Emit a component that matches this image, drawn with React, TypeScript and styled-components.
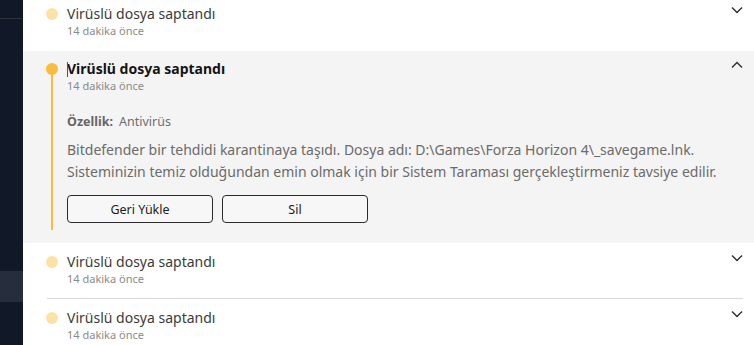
import React from 'react';
import styled, { createGlobalStyle, css } from 'styled-components';

const GlobalStyle = createGlobalStyle`
  html, body {
    margin: 0;
    padding: 0;
    overflow: hidden;
  }
  body {
    font-family: "Noto Sans", "Open Sans", sans-serif;
  }
`;

const Shell = styled.div`
  display: flex;
  width: 754px;
  height: 345px;
  overflow: hidden;
  background: #ffffff;
`;

const Sidebar = styled.aside`
  width: 23px;
  flex-shrink: 0;
  background: #111827;
  display: flex;
  flex-direction: column;
  padding-top: 18px;
`;

const SideDivider = styled.div`
  height: 1px;
  background: #2c313c;
`;

const SideActive = styled.div`
  margin-top: 252px;
  height: 31px;
  background: #262e3d;
`;

const Main = styled.main`
  flex: 1;
  overflow: hidden;
`;

const List = styled.ul`
  list-style: none;
  margin: -5px 0 0;
  padding: 0;
`;

const Item = styled.li<{ $open?: boolean; $divider?: boolean }>`
  position: relative;
  display: grid;
  grid-template-columns: 12px 1fr 20px;
  column-gap: 9px;
  padding: 9px 7px 0 23px;
  height: ${({ $open }) => ($open ? '192px' : '56px')};
  box-sizing: border-box;
  background: ${({ $open }) => ($open ? '#f4f4f4' : '#ffffff')};
  ${({ $open }) =>
    $open &&
    css`
      padding-top: 8px;
    `}
  ${({ $divider }) =>
    $divider &&
    css`
      &::after {
        content: '';
        position: absolute;
        left: 24px;
        right: 11px;
        bottom: 0;
        height: 1px;
        background: #d9d9d9;
      }
    `}
`;

const Rail = styled.div<{ $open?: boolean }>`
  position: relative;
  display: flex;
  justify-content: center;
  padding-top: 4px;
  ${({ $open }) =>
    $open &&
    css`
      &::after {
        content: '';
        position: absolute;
        top: 12px;
        left: 5px;
        width: 2px;
        height: 159px;
        background: #fbbc3e;
      }
    `}
`;

const Dot = styled.span<{ $open?: boolean }>`
  width: 12px;
  height: 12px;
  border-radius: 50%;
  background: ${({ $open }) => ($open ? '#fbbc3e' : '#fde2a5')};
`;

const Body = styled.div`
  display: flex;
  flex-direction: column;
  min-width: 0;
`;

const Title = styled.div<{ $open?: boolean }>`
  position: relative;
  font-size: 14px;
  line-height: 20px;
  color: ${({ $open }) => ($open ? '#141414' : '#3b3b3b')};
  font-weight: ${({ $open }) => ($open ? 700 : 400)};
  white-space: nowrap;
  ${({ $open }) =>
    $open &&
    css`
      &::before {
        content: '';
        position: absolute;
        left: 0;
        top: 3px;
        width: 1px;
        height: 15px;
        background: #1e5fb4;
      }
    `}
`;

const Time = styled.div`
  font-size: 11px;
  line-height: 14px;
  color: #8a8a8a;
`;

const Property = styled.div`
  margin-top: 21px;
  font-size: 12.5px;
  line-height: 16px;
  color: #6e6e6e;
  display: flex;
  gap: 6px;

  strong {
    font-weight: 700;
    color: #666666;
  }
`;

const Message = styled.p`
  margin: 9px 0 0;
  font-size: 14px;
  line-height: 22px;
  color: #6b6b6b;
  white-space: nowrap;
`;

const Actions = styled.div`
  display: flex;
  gap: 9px;
  margin-top: 12px;
`;

const Button = styled.button`
  width: 146px;
  height: 28px;
  border: 1px solid #2a2a2a;
  border-radius: 4px;
  background: #f7f7f7;
  font-family: inherit;
  font-size: 12.5px;
  color: #1c1c1c;
  padding: 0;
  cursor: pointer;
`;

const Toggle = styled.div`
  display: flex;
  justify-content: center;
  padding-top: 2px;
  color: #2e2e2e;
`;

const Chevron = ({ up }: { up?: boolean }) => (
  <svg width="12" height="8" viewBox="0 0 12 8" fill="none">
    <path
      d={up ? 'M1 6.5 6 1.5l5 5' : 'M1 1.5l5 5 5-5'}
      stroke="currentColor"
      strokeWidth="1.4"
    />
  </svg>
);

interface IAlert {
  open?: boolean;
  divider?: boolean;
}

const alerts: IAlert[] = [{}, { open: true }, { divider: true }, {}];

const App: React.FC = () => {
  return (
    <>
      <GlobalStyle />
      <Shell>
        <Sidebar>
          <SideDivider />
          <SideActive />
        </Sidebar>
        <Main>
          <List>
            {alerts.map((a, i) => (
              <Item key={i} $open={a.open} $divider={a.divider}>
                <Rail $open={a.open}>
                  <Dot $open={a.open} />
                </Rail>
                <Body>
                  <Title $open={a.open}>Virüslü dosya saptandı</Title>
                  <Time>14 dakika önce</Time>
                  {a.open && (
                    <>
                      <Property>
                        <strong>Özellik:</strong>
                        <span>Antivirüs</span>
                      </Property>
                      <Message>
                        Bitdefender bir tehdidi karantinaya taşıdı. Dosya adı: D:\Games\Forza Horizon
                        4\_savegame.lnk.
                        <br />
                        Sisteminizin temiz olduğundan emin olmak için bir Sistem Taraması
                        gerçekleştirmeniz tavsiye edilir.
                      </Message>
                      <Actions>
                        <Button>Geri Yükle</Button>
                        <Button>Sil</Button>
                      </Actions>
                    </>
                  )}
                </Body>
                <Toggle>
                  <Chevron up={a.open} />
                </Toggle>
              </Item>
            ))}
          </List>
        </Main>
      </Shell>
    </>
  );
};

export default App;
